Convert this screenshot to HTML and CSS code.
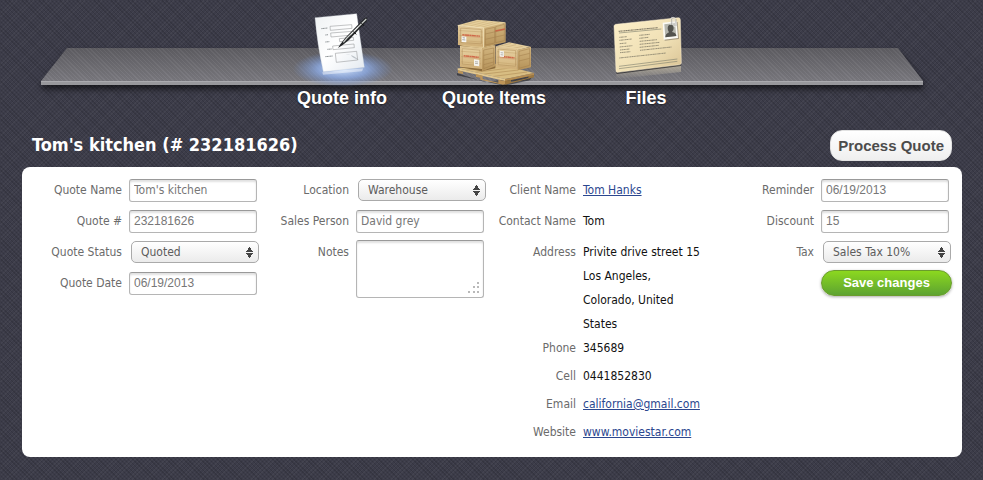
FILE: index.html
```html
<!DOCTYPE html>
<html lang="en">
<head>
<meta charset="utf-8">
<title>Tom's kitchen</title>
<link rel="stylesheet" href="styles.css">
</head>
<body>
<div class="page">
  <header class="top">
    <div class="shelf"><div class="shelf-face"></div></div>
    <nav class="tabs">
      <a class="tab" href="#info">
        <svg class="tab-icon" viewBox="-24 0 360 249" aria-hidden="true">
          <defs>
            <radialGradient id="glow"><stop offset="0" stop-color="#d4e6ff"/><stop offset=".5" stop-color="#8fb0ee" stop-opacity=".75"/><stop offset="1" stop-color="#6f8fd0" stop-opacity="0"/></radialGradient>
            <linearGradient id="sheet" x2="1" y2="1"><stop offset="0" stop-color="#eef1f3"/><stop offset=".5" stop-color="#fff"/><stop offset="1" stop-color="#e3e9f0"/></linearGradient>
          </defs>
          <ellipse cx="158" cy="192" rx="150" ry="54" fill="url(#glow)"/>
          <path d="M97 202L220 190L216 199L99 209z" fill="#fff" opacity=".45"/>
          <path d="M75 38L200 26Q212 110 223 187L100 200Q82 120 75 38z" fill="url(#sheet)" stroke="#cfd5dc" stroke-width="1"/>
          <path d="M166 150Q188 145 207 166Q184 157 183 150z" fill="#bcc2c8"/>
          <g fill="none" stroke="#8f9294" stroke-width="1.6">
            <path d="M120 64l65-5 1 11-65 6zM122 84l66-5 1 11-66 6zM148 101l42-4 1 9-42 4zM128 123l64-6 1 11-64 6zM136 145l64-6 3 26-64 7z"/>
          </g>
          <g fill="none" stroke="#8d9295" stroke-width="3" stroke-dasharray="4 1 3 1"><path d="M94 71l19-2M106 90l9-1M106 111l12-1M112 133l13-1M106 155l22-2"/></g>
          <path d="M232 37L223 40L166 98L151 118L144 129L158 120L177 105L230 49z" fill="#242628"/>
          <path d="M229 42L171 99L160 112" fill="none" stroke="#cdd0cd" stroke-width="3.5"/>
          <path d="M205 66L182 89" stroke="#fff" stroke-width="3"/>
          <path d="M190 80l9 8M214 55l8 7" stroke="#111" stroke-width="3"/>
        </svg>
        <span class="tab-label">Quote info</span>
      </a>
      <a class="tab" href="#items">
        <svg class="tab-icon" viewBox="-3 0 360 249" aria-hidden="true">
          <defs>
            <linearGradient id="wood" x2="0" y2="1"><stop offset="0" stop-color="#e8d3a4"/><stop offset="1" stop-color="#d2b27a"/></linearGradient>
            <linearGradient id="side" x2="0" y2="1"><stop offset="0" stop-color="#d3b680"/><stop offset="1" stop-color="#b49158"/></linearGradient>
            <g id="crate">
              <path d="M0 0L78 5V61L0 55z" fill="url(#wood)"/>
              <path d="M4 14l70 4M4 28l70 5M4 42l70 5" stroke="#c3a16c" stroke-width="1.5"/>
              <path d="M3 3L75 8V57L3 51z" fill="none" stroke="#c5a16b" stroke-width="1"/>
              <path d="M8 7L70 11V52L8 48z" fill="none" stroke="#ad8a56" stroke-width="1.5"/>
              <path d="M13 26l53 4" stroke="#d0694a" stroke-width="4" stroke-dasharray="7 1 12 1"/>
              <path d="M13 30l53 4" stroke="#db9b75" stroke-width="1.5"/>
            </g>
          </defs>
          <path d="M66 204L150 232L297 211L284 226L208 242L66 211z" fill="#15151a" opacity=".55"/>
          <path d="M68 190L186 176L297 204L210 222z" fill="#d8bd82"/>
          <path d="M88 196L200 184M112 203L226 189M140 208L250 195M170 215L276 201" stroke="#b3915b" stroke-width="2"/>
          <path d="M68 190L210 222V228L68 196z" fill="#e1c78f"/>
          <path d="M210 222L297 204V211L210 229z" fill="#b38b50"/>
          <path d="M69 196L84 200V207L123 216V207L143 212V222L190 233V224L210 228V238L204 239L136 224V218L83 207L69 204z" fill="#bd9558"/>
          <path d="M210 228L228 225V231L280 219V214L297 210V217L210 239z" fill="#9b773f"/>
          <path d="M75 119L114 113L181 122V190L140 199L75 187z" fill="#8d6c3c"/>
          <g transform="translate(75 123) scale(.85 1.13)"><use href="#crate"/></g>
          <path d="M141 130L181 121V184L141 199z" fill="url(#side)"/>
          <path d="M146 135L176 129V179L146 191zM146 151l30-7M146 165l30-7M146 179l30-8" fill="none" stroke="#a17d4a" stroke-width="1.5"/>
          <path d="M75 122L116 115L181 121L141 130z" fill="#ddc38e"/>
          <path d="M117 163l16 2v19l-16-2z" fill="#f5f3ed"/><path d="M120 170l9 1M120 175l9 1" stroke="#98958f" stroke-width="2"/>
          <path d="M183 124L222 112L287 125L248 135z" fill="#e4ce9d"/>
          <path d="M193 124l35-9M208 128l35-9M226 132l37-8" stroke="#c2a270" stroke-width="1.5"/>
          <g transform="translate(183 124) scale(.84 1.15)"><use href="#crate"/></g>
          <path d="M248 134L288 125V187L248 196z" fill="url(#side)"/>
          <path d="M252 139L284 131V181L252 190zM252 153l32-8M252 168l32-8" fill="none" stroke="#a17d4a" stroke-width="1.5"/>
          <path d="M194 137l13 2v17l-13-1z" fill="#f5f3ed"/><path d="M197 143l8 1M197 149l8 1" stroke="#98958f" stroke-width="2"/>
          <path d="M68 61L127 44L213 52L176 69L145 72z" fill="#e5cf9c"/>
          <path d="M84 61l54-14M101 64l56-15M118 66l57-15M135 68l58-16" stroke="#c8a975" stroke-width="1.5"/>
          <g transform="translate(69 62) scale(1 1.05)"><use href="#crate"/></g>
          <path d="M146 69L212 53V112L146 127z" fill="url(#side)"/>
          <path d="M151 73L179 67V114L151 120zM182 65l26-7v49l-26 6zM151 87l57-13M151 103l57-13" fill="none" stroke="#a17d4a" stroke-width="1.5"/>
          <path d="M181 78l29-6" stroke="#c76546" stroke-width="4"/>
          <path d="M80 94l14 1v17l-14-1z" fill="#f8f7f3"/><path d="M82 104l9 1M83 98l7 1" stroke="#7c7d7e" stroke-width="2"/>
          <path d="M68 61L146 69V127" fill="none" stroke="#f0dfb5" stroke-width="3"/>
        </svg>
        <span class="tab-label">Quote Items</span>
      </a>
      <a class="tab" href="#files">
        <svg class="tab-icon" viewBox="-42 0 360 249" aria-hidden="true">
          <defs>
            <linearGradient id="card" x2="1" y2="1"><stop offset="0" stop-color="#fdf0ca"/><stop offset=".6" stop-color="#efdfb4"/><stop offset="1" stop-color="#d8c192"/></linearGradient>
            <linearGradient id="mirror" x2="0" y2="1"><stop offset="0" stop-color="#e5d9b9" stop-opacity=".6"/><stop offset="1" stop-color="#e5d9b9" stop-opacity="0"/></linearGradient>
          </defs>
          <path d="M49 205L243 179V201L49 222z" fill="url(#mirror)"/>
          <path d="M48 200L244 175L243 183L50 207z" fill="#17171b" opacity=".65"/>
          <path d="M47 58L235 38Q241 38 241 44L244 174Q244 178 239 179L54 202Q48 203 48 197L42 64Q42 59 47 58z" fill="url(#card)" stroke="#f8ecd0" stroke-width="1.5"/>
          <g fill="none" stroke="#867f6b" stroke-width="3.5" stroke-dasharray="4 1 6 1 3 1">
            <path d="M56 79L174 68"/><path d="M58 97l23-2M118 91l32-3M58 106l38-4M118 100l27-3M59 116l21-2M119 109l52-5M59 126l38-4M119 118l60-6M60 135l29-3M119 127l57-6M60 143l31-3M120 136l95-10M58 159l140-15" stroke-width="2.5"/>
          </g>
          <path d="M57 84L184 72M57 184L232 162M57 191L232 169" stroke="#7b7c6b" stroke-width="1.8"/>
          <path d="M191 56L233 51L237 102L194 107z" fill="#807765" opacity=".65"/>
          <path d="M188 53L230 49L234 99L191 104z" fill="#fbfaf4"/>
          <path d="M193 58L225 54L229 93L196 97z" fill="#b5b6ae"/>
          <path d="M203 70Q203 60 211 59Q221 59 221 69Q221 77 216 81Q228 83 229 93L196 97Q196 87 207 82Q203 77 203 70z" fill="#53534e"/>
          <path d="M213 60V39Q219 34 226 40L228 62M217 60V44Q220 39 222 44V64Q227 69 230 62" fill="none" stroke="#e7e7e5" stroke-width="2.5"/>
          <path d="M215 61V42M228 63V42" fill="none" stroke="#6a6a6a" stroke-width="1.2"/>
        </svg>
        <span class="tab-label">Files</span>
      </a>
    </nav>
  </header>

  <div class="title-bar">
    <h1 class="title">Tom's kitchen (# 232181626)</h1>
    <button class="process" type="button">Process Quote</button>
  </div>

  <form class="panel">
    <div class="column">
      <div class="row"><label for="name">Quote Name</label><input class="box" id="name" type="text" value="Tom's kitchen"></div>
      <div class="row"><label for="number">Quote #</label><input class="box numeric" id="number" type="text" value="232181626"></div>
      <div class="row"><label for="status">Quote Status</label><select class="picker" id="status"><option>Quoted</option></select></div>
      <div class="row"><label for="date">Quote Date</label><input class="box numeric" id="date" type="text" value="06/19/2013"></div>
    </div>
    <div class="column">
      <div class="row"><label for="location">Location</label><select class="picker" id="location"><option>Warehouse</option></select></div>
      <div class="row"><label for="person">Sales Person</label><input class="box" id="person" type="text" value="David grey"></div>
      <div class="row"><label for="notes">Notes</label>
        <div class="notes-wrap">
          <textarea class="box notes" id="notes"></textarea>
          <svg class="grip" viewBox="0 0 12 12" aria-hidden="true"><path fill="#b9b9b9" d="M9 0h2v2H9zM5 4h2v2H5zM9 4h2v2H9zM0 9h2v2H0zM5 9h2v2H5zM9 9h2v2H9z"/></svg>
        </div>
      </div>
    </div>
    <dl class="column client">
      <div class="row"><dt>Client Name</dt><dd><a href="#client">Tom Hanks</a></dd></div>
      <div class="row"><dt>Contact Name</dt><dd>Tom</dd></div>
      <div class="row flush"><dt>Address</dt><dd>Privite drive street 15<br>Los Angeles,<br>Colorado, United<br>States</dd></div>
      <div class="row near"><dt>Phone</dt><dd>345689</dd></div>
      <div class="row near"><dt>Cell</dt><dd>0441852830</dd></div>
      <div class="row near"><dt>Email</dt><dd><a href="#email">california@gmail.com</a></dd></div>
      <div class="row flush"><dt>Website</dt><dd><a href="#website">www.moviestar.com</a></dd></div>
    </dl>
    <div class="column">
      <div class="row"><label for="reminder">Reminder</label><input class="box numeric" id="reminder" type="text" value="06/19/2013"></div>
      <div class="row"><label for="discount">Discount</label><input class="box numeric" id="discount" type="text" value="15"></div>
      <div class="row"><label for="tax">Tax</label><select class="picker" id="tax"><option>Sales Tax 10%</option></select></div>
      <button class="save" type="button">Save changes</button>
    </div>
  </form>
</div>
</body>
</html>
```
FILE: styles.css
```css
* { box-sizing: border-box; }

body {
  margin: 0;
  min-height: 100vh;
  font: 12px/24px "DejaVu Sans Condensed", "DejaVu Sans", sans-serif;
  font-stretch: condensed;
  color: #111;
  background:
    repeating-linear-gradient(45deg, #00000020 0 1px, #0000 1px 3px),
    repeating-linear-gradient(135deg, #ffffff0a 0 1px, #0000 1px 3px),
    #3c3c49;
}

.page { padding: 0 21px 23px 22px; }

.top { display: grid; }

.shelf, .tabs { grid-area: 1 / 1; }

.shelf {
  margin: 48px 39px 0 19px;
  filter: drop-shadow(1px 4px 3px #0009);
  height: 37px;
}

.shelf-face {
  height: 100%;
  clip-path: polygon(26px 0, calc(100% - 25px) 0, 100% 33px, 100% 100%, 0 100%, 0 33px);
  background:
    linear-gradient(#aaaaae 0 1px, #98989c 1px) 0 33px / 100% 4px no-repeat,
    repeating-linear-gradient(45deg, #ffffff08 0 1px, #0000000a 1px 3px),
    linear-gradient(#5f5e63, #7f7e84);
}

.tabs {
  position: relative;
  display: flex;
  justify-content: center;
  padding: 5px 0 0 4px;
}

.tab {
  width: 152px;
  display: flex;
  flex-direction: column;
  align-items: center;
  color: #fff;
  text-decoration: none;
}

.tab-icon { width: 120px; height: 83px; }

.tab-label {
  font: bold 18px/20px "Liberation Sans", Arial, sans-serif;
  text-shadow: 0 1px 2px #0008;
}

.title-bar {
  display: flex;
  align-items: center;
  justify-content: space-between;
  padding: 22px 10px 6px;
}

.title {
  margin: 0;
  padding-bottom: 2px;
  font-size: 18px;
  line-height: 28px;
  color: #fff;
}

.process {
  height: 31px;
  padding: 0 7px;
  border: 1px solid #e2e2e2;
  border-radius: 12px;
  background: linear-gradient(#fff, #efefef);
  font: bold 15px/20px "Liberation Sans", Arial, sans-serif;
  color: #4c4c4c;
}

.panel {
  display: grid;
  grid-template-columns: minmax(0, 227fr) minmax(0, 227fr) minmax(0, 238fr) minmax(0, 227fr);
  padding: 11px 13px 13px 8px;
  border-radius: 8px;
  background: #fff;
}

.column { margin: 0; }

.row {
  display: flex;
  align-items: flex-start;
  gap: 7px;
  margin-bottom: 7px;
}

.row.flush { margin-bottom: 0; }
.row.near { margin-bottom: 4px; }

.row label, .row dt {
  flex: 0 0 92px;
  padding-top: 1px;
  line-height: 23px;
  text-align: right;
  white-space: nowrap;
  color: #6b6b6b;
}

.row dd { margin: 0; white-space: nowrap; }
.row dd a { color: #2b478f; }

.box, .picker {
  flex: 1;
  min-width: 0;
  font: inherit;
  color: #777;
}

.box {
  height: 23px;
  margin-top: 1px;
  padding: 0 4px 2px;
  border: 1px solid #b5b5b5;
  border-top-color: #999;
  border-radius: 3px;
  background: #fff;
  box-shadow: inset 0 2px 2px #0000001f;
}

.numeric { font-family: "Liberation Sans", Arial, sans-serif; }

.picker {
  appearance: none;
  height: 22px;
  margin: 1px -2px 1px 2px;
  padding: 0 9px;
  border: 1px solid #aaa;
  border-radius: 5px;
  line-height: 20px;
  color: #5c5c5c;
  background:
    conic-gradient(from 145deg at 50% 0, #444 0 70deg, #0000 0) right 5px top 5px / 7px 5px no-repeat,
    conic-gradient(from -35deg at 50% 100%, #444 0 70deg, #0000 0) right 5px top 11px / 7px 5px no-repeat,
    linear-gradient(#fff, #ebebeb);
}

.notes-wrap { position: relative; flex: 1; min-width: 0; display: flex; }

.notes { height: 58px; margin-top: 0; resize: none; }

.grip {
  position: absolute;
  right: 4px;
  bottom: 4px;
  width: 12px;
  height: 12px;
}

.save {
  display: block;
  width: 131px;
  height: 26px;
  margin: -1px -3px 0 auto;
  border: 1px solid #6a9c2c;
  border-radius: 13px;
  background: linear-gradient(#8cd81f, #5da331);
  box-shadow: 0 1px 3px #0005;
  font: bold 13px/20px "Liberation Sans", Arial, sans-serif;
  color: #fff;
}
```
